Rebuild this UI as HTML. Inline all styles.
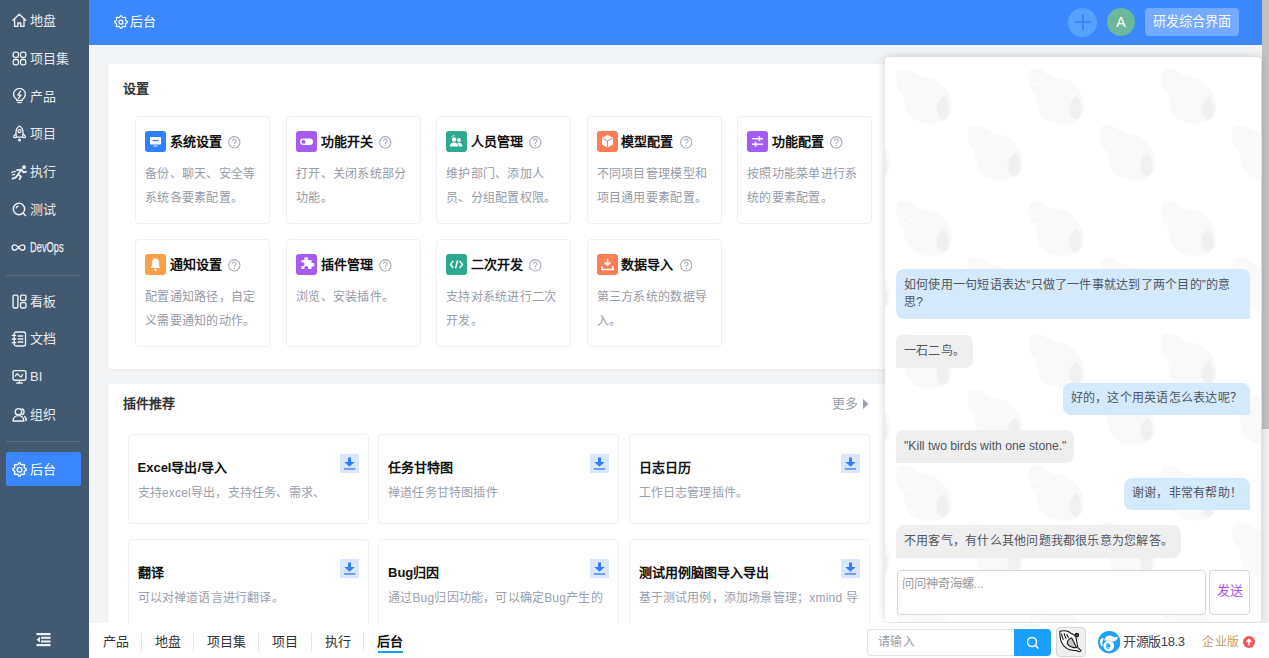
<!DOCTYPE html>
<html lang="zh-CN"><head><meta charset="utf-8">
<style>
*{box-sizing:border-box;margin:0;padding:0}
html,body{width:1269px;height:658px;overflow:hidden;background:#f3f4f6;font-family:"Liberation Sans",sans-serif;color:#333}
.abs{position:absolute}
#side{position:absolute;left:0;top:0;width:89px;height:658px;background:#43596f}
.nav{position:absolute;left:0;width:89px;height:20px;color:#e6eaf0;font-size:13px;line-height:20px}
.nav svg{position:absolute;left:11.5px;top:3px;width:15px;height:15px}
.nav span{position:absolute;left:30px;top:1px}
.sep{position:absolute;left:6px;width:75px;height:1px;background:#5d7086}
#active{position:absolute;left:6px;top:452px;width:75px;height:34px;background:#3a87ff;border-radius:2px}
#head{position:absolute;left:89px;top:0;width:1173px;height:45px;background:#3a87ff}
#sbar{position:absolute;left:1262px;top:0;width:7px;height:623px;background:#f1f1f1}
#sthumb{position:absolute;left:1262px;top:0;width:7px;height:429px;background:#c1c1c1}
.card{position:absolute;background:#fff;border-radius:4px;box-shadow:0 1px 4px rgba(0,0,0,.05)}
.ctitle{position:absolute;font-size:13px;font-weight:bold;color:#333;line-height:20px}
.tile{position:absolute;width:135px;height:107.5px;border:1px solid #eef0f3;border-radius:4px;background:#fff}
.tile .ic{position:absolute;left:9.2px;top:14px;width:21px;height:21px;border-radius:3px}
.tile .ic svg{position:absolute;left:0;top:0;width:21px;height:21px}
.tile .tt{position:absolute;left:33.8px;top:14px;font-size:13px;font-weight:bold;color:#111;line-height:21px;white-space:nowrap}
.tile .q{display:inline-block;vertical-align:top;margin-left:6.5px;margin-top:5px;width:12.6px;height:12.6px}
.tile .ds{position:absolute;left:9px;top:45px;font-size:12px;letter-spacing:.3px;color:#959ba7;line-height:24.3px;white-space:nowrap}
.ptile{position:absolute;width:241px;height:89.5px;border:1px solid #eef0f3;border-radius:4px;background:#fff}
.ptile .pt{position:absolute;left:9px;top:21.5px;font-size:13px;font-weight:bold;color:#111;line-height:21px;white-space:nowrap}
.ptile .pd{position:absolute;left:9px;top:47.5px;font-size:12px;letter-spacing:.2px;color:#9aa0ac;line-height:20px;white-space:nowrap}
.ptile .dl{position:absolute;left:211px;top:19px;width:19px;height:19px;background:#dae7ff}
#chat{position:absolute;left:885px;top:57px;width:376px;height:565px;background:#fff;border-radius:4px;box-shadow:0 0 8px rgba(0,0,0,.18);overflow:hidden}
#pat{position:absolute;left:0;top:0}
.bub{position:absolute;font-size:12px;letter-spacing:.23px;line-height:17.5px;color:#4f5562;padding:7.5px 8px;white-space:nowrap}
.bu{background:#d4e9fc;border-radius:8px 8px 0 8px}
.ba{background:#efefef;border-radius:8px 8px 8px 0}
#foot{position:absolute;left:89px;top:623px;width:1180px;height:35px;background:#fff}
.ft{position:absolute;top:0;height:35px;line-height:38px;font-size:13px;color:#333}
.fsep{position:absolute;top:10px;width:1px;height:18px;background:#e5e5e5}
</style></head><body>

<div id="side">
  <div class="nav" style="top:10px"><svg viewBox="0 0 15 15"><path d="M.9 7.3 7.3 1.2l6.4 6.1M2.6 6v7.4h3.3V10h2.8v3.4H12V6" fill="none" stroke="#eef1f5" stroke-width="1.35" stroke-linejoin="round" stroke-linecap="round"/></svg><span>地盘</span></div>
  <div class="nav" style="top:48px"><svg viewBox="0 0 15 15"><g fill="none" stroke="#eef1f5" stroke-width="1.3"><rect x="1.2" y="1.2" width="5.3" height="5.3" rx="1.8"/><rect x="8.5" y="1.2" width="5.3" height="5.3" rx="1.8"/><rect x="1.2" y="8.5" width="5.3" height="5.3" rx="1.8"/><rect x="8.5" y="8.5" width="5.3" height="5.3" rx="1.8"/></g></svg><span>项目集</span></div>
  <div class="nav" style="top:86px"><svg viewBox="0 0 15 16" style="height:16px;top:2px"><g fill="none" stroke="#eef1f5" stroke-width="1.3" stroke-linejoin="round"><path d="M4.6 11.2C2.7 10 1.6 8.2 1.6 6.3A5.9 5.9 0 0 1 13.4 6.3c0 1.9-1.1 3.7-3 4.9v1.2H4.6z"/><path d="M5.2 14.5h4.6"/><path d="M8.6 3.2 5.9 7.1h3.2L6.4 10.2" stroke-linecap="round"/></g></svg><span>产品</span></div>
  <div class="nav" style="top:123px"><svg viewBox="0 0 15 17" style="height:17px;top:2px"><g fill="none" stroke="#eef1f5" stroke-width="1.3" stroke-linejoin="round"><path d="M7.5 1C10.3 2.6 11.3 5.4 11 8.8L10.6 12.2H4.4L4 8.8C3.7 5.4 4.7 2.6 7.5 1Z"/><path d="M4.1 8.6 1.9 10.9C1.5 11.3 1.6 12.6 2.5 12.6H4.4M10.9 8.6 13.1 10.9C13.5 11.3 13.4 12.6 12.5 12.6H10.6"/><circle cx="7.5" cy="6.2" r="1.5"/></g><circle cx="7.5" cy="14.9" r="1.5" fill="#eef1f5"/></svg><span>项目</span></div>
  <div class="nav" style="top:161px"><svg viewBox="0 0 16 15" style="width:16px;height:15px;left:10.8px;top:3.5px"><circle cx="13" cy="2.2" r="1.9" fill="#eef1f5"/><g fill="none" stroke="#eef1f5" stroke-width="1.7" stroke-linecap="round" stroke-linejoin="round"><path d="M6 5.2 10.4 4.6 12.6 7.4 15.2 6.6"/><path d="M10.4 4.6 7 9.6 10 11.4 8.6 14.2"/><path d="M7 9.6 4.6 12.6 1.4 13.6"/></g><g stroke="#eef1f5" stroke-width="1.1" stroke-linecap="round"><path d="M.6 7.4 4.4 6.4M1.2 10 3.8 9.4"/></g></svg><span>执行</span></div>
  <div class="nav" style="top:199px"><svg viewBox="0 0 14 14"><g fill="none" stroke="#eef1f5" stroke-width="1.4"><circle cx="6.5" cy="6.5" r="5.3"/><path d="M10.3 10.3 13 13M3.8 6A2.8 2.8 0 0 1 6 3.8"/></g></svg><span>测试</span></div>
  <div class="nav" style="top:237px"><svg viewBox="0 0 14 14" style="width:15px;left:11px"><path d="M7 7C5.5 5.2 4.6 4.5 3.5 4.5a2.5 2.5 0 0 0 0 5C4.6 9.5 5.5 8.8 7 7s2.4-2.5 3.5-2.5a2.5 2.5 0 0 1 0 5C9.4 9.5 8.5 8.8 7 7z" fill="none" stroke="#eef1f5" stroke-width="1.3"/></svg><span style="font-size:15.5px;line-height:20px;transform:scaleX(.6);transform-origin:0 50%;top:-.5px;-webkit-text-stroke:.25px #eef1f5">DevOps</span></div>
  <div class="sep" style="top:275px"></div>
  <div class="nav" style="top:291px"><svg viewBox="0 0 14 14"><g fill="none" stroke="#eef1f5" stroke-width="1.3"><rect x="1" y="1" width="4.5" height="12" rx="1"/><rect x="8" y="1" width="5" height="5" rx="1"/><rect x="8" y="8" width="5" height="5" rx="1"/></g></svg><span>看板</span></div>
  <div class="nav" style="top:328px"><svg viewBox="0 0 16 16" style="width:16px;height:16px;left:10.5px;top:2.5px"><g fill="none" stroke="#eef1f5" stroke-width="1.3" stroke-linecap="round"><rect x="3.2" y="1" width="11.3" height="14" rx="2"/><path d="M1.3 4.3h3.4M1.3 8h3.4M1.3 11.7h3.4M7.2 5h4.6M7.2 8h4.6M7.2 11h4.6"/></g></svg><span>文档</span></div>
  <div class="nav" style="top:366px"><svg viewBox="0 0 14 14"><g fill="none" stroke="#eef1f5" stroke-width="1.3"><rect x="1" y="1.5" width="12" height="9" rx="1.5"/><path d="M4 13h6M7 10.5V13M3 7c1.2-3 2.2-3 3.5-1s2.3 2 3.5-1"/></g></svg><span>BI</span></div>
  <div class="nav" style="top:404px"><svg viewBox="0 0 14 14"><g fill="none" stroke="#eef1f5" stroke-width="1.3"><circle cx="6" cy="4.5" r="3"/><path d="M1 13c0-3 2.2-5 5-5s5 2 5 5zM9 1.6a3 3 0 0 1 0 5.8M11.5 8.5c1 .8 1.8 2.2 1.8 4.5"/></g></svg><span>组织</span></div>
  <div class="sep" style="top:441px"></div>
  <div id="active"></div>
  <div class="nav" style="top:459px"><svg viewBox="0 0 14 14"><g fill="none" stroke="#fff" stroke-width="1.3"><path d="M6.39 0.83 7.61 0.83 8.42 2.31 9.31 2.68 10.93 2.21 11.79 3.07 11.32 4.69 11.69 5.58 13.17 6.39 13.17 7.61 11.69 8.42 11.32 9.31 11.79 10.93 10.93 11.79 9.31 11.32 8.42 11.69 7.61 13.17 6.39 13.17 5.58 11.69 4.69 11.32 3.07 11.79 2.21 10.93 2.68 9.31 2.31 8.42 0.83 7.61 0.83 6.39 2.31 5.58 2.68 4.69 2.21 3.07 3.07 2.21 4.69 2.68 5.58 2.31Z" stroke-linejoin="round"/><circle cx="7" cy="7.2" r="2.2"/></g></svg><span style="color:#fff">后台</span></div>
  <svg class="abs" style="left:36px;top:633px" width="15" height="14" viewBox="0 0 15 14"><g fill="#eef1f5"><rect x="0.5" y="0" width="14" height="2.2"/><rect x="5" y="3.8" width="9.5" height="2"/><rect x="5" y="7.5" width="9.5" height="2"/><rect x="0.5" y="11" width="14" height="2.2"/><path d="M0.5 6.7 4 3.8v5.8z"/></g></svg>
</div>

<div id="head">
  <svg class="abs" style="left:25px;top:15px" width="14" height="14" viewBox="0 0 14 14"><g fill="none" stroke="#fff" stroke-width="1.2"><path d="M6.39 0.83 7.61 0.83 8.42 2.31 9.31 2.68 10.93 2.21 11.79 3.07 11.32 4.69 11.69 5.58 13.17 6.39 13.17 7.61 11.69 8.42 11.32 9.31 11.79 10.93 10.93 11.79 9.31 11.32 8.42 11.69 7.61 13.17 6.39 13.17 5.58 11.69 4.69 11.32 3.07 11.79 2.21 10.93 2.68 9.31 2.31 8.42 0.83 7.61 0.83 6.39 2.31 5.58 2.68 4.69 2.21 3.07 3.07 2.21 4.69 2.68 5.58 2.31Z" stroke-linejoin="round"/><circle cx="7" cy="7.2" r="2"/></g></svg>
  <div class="abs" style="left:41px;top:12px;font-size:13px;line-height:20px;color:#fff">后台</div>
  <div class="abs" style="left:979px;top:8px;width:29px;height:29px;border-radius:50%;background:#56a3ff"></div>
  <div class="abs" style="left:986px;top:21px;width:16px;height:2px;background:#3a87ff"></div>
  <div class="abs" style="left:993px;top:14px;width:2px;height:16px;background:#3a87ff"></div>
  <div class="abs" style="left:1018px;top:8px;width:28px;height:28px;border-radius:50%;background:#6bb99a;color:#fff;font-size:14px;line-height:28px;text-align:center">A</div>
  <div class="abs" style="left:1056px;top:7.5px;width:94px;height:28.5px;border-radius:4px;background:#74aaff;color:#f4f8ff;font-size:13.2px;line-height:28px;text-align:center">研发综合界面</div>
</div>

<div id="sbar"></div><div id="sthumb"></div>

<!-- settings card -->
<div class="card" style="left:108px;top:64px;width:790px;height:305px">
  <div class="ctitle" style="left:15px;top:15px">设置</div>
</div>
<div class="tile" style="left:135px;top:116px"><div class="ic" style="background:#2f7fff"><svg viewBox="0 0 21 21"><rect x="5" y="6" width="11" height="7.5" rx="1" fill="#fff"/><rect x="7.5" y="9" width="6" height="1.2" fill="#2f7fff"/><rect x="8.5" y="14.5" width="4" height="1" fill="#fff"/></svg></div><div class="tt">系统设置<svg class="q" viewBox="0 0 12 12"><circle cx="6" cy="6" r="5.4" fill="none" stroke="#a3a8b3" stroke-width="1"/><path d="M4.3 4.6a1.7 1.7 0 1 1 2.5 1.5c-.6.3-.8.6-.8 1.2v.3" fill="none" stroke="#a3a8b3" stroke-width="1"/><circle cx="6" cy="9" r=".6" fill="#a3a8b3"/></svg></div><div class="ds">备份、聊天、安全等<br>系统各要素配置。</div></div>
<div class="tile" style="left:286px;top:116px"><div class="ic" style="background:#a45cf5"><svg viewBox="0 0 21 21"><rect x="4" y="7.5" width="13" height="6.5" rx="3.25" fill="#fff"/><circle cx="7.5" cy="10.75" r="2" fill="#a45cf5"/></svg></div><div class="tt">功能开关<svg class="q" viewBox="0 0 12 12"><circle cx="6" cy="6" r="5.4" fill="none" stroke="#a3a8b3" stroke-width="1"/><path d="M4.3 4.6a1.7 1.7 0 1 1 2.5 1.5c-.6.3-.8.6-.8 1.2v.3" fill="none" stroke="#a3a8b3" stroke-width="1"/><circle cx="6" cy="9" r=".6" fill="#a3a8b3"/></svg></div><div class="ds">打开、关闭系统部分<br>功能。</div></div>
<div class="tile" style="left:436px;top:116px"><div class="ic" style="background:#2ea88e"><svg viewBox="0 0 21 21"><circle cx="8" cy="8.5" r="2.2" fill="#fff"/><path d="M3.8 15.5c0-2.5 1.8-4 4.2-4s4.2 1.5 4.2 4z" fill="#fff"/><circle cx="13" cy="9" r="1.9" fill="#fff"/><path d="M11.5 11.8c2.8-.6 5 .8 5 3.7h-3.5" fill="#fff"/><path d="M5.5 5.5l3-1" stroke="#fff" stroke-width=".8"/></svg></div><div class="tt">人员管理<svg class="q" viewBox="0 0 12 12"><circle cx="6" cy="6" r="5.4" fill="none" stroke="#a3a8b3" stroke-width="1"/><path d="M4.3 4.6a1.7 1.7 0 1 1 2.5 1.5c-.6.3-.8.6-.8 1.2v.3" fill="none" stroke="#a3a8b3" stroke-width="1"/><circle cx="6" cy="9" r=".6" fill="#a3a8b3"/></svg></div><div class="ds">维护部门、添加人<br>员、分组配置权限。</div></div>
<div class="tile" style="left:586.5px;top:116px"><div class="ic" style="background:#ff7d54"><svg viewBox="0 0 21 21"><path d="M10.5 4 16 6.8v6.6L10.5 16.5 5 13.4V6.8z" fill="#fff"/><path d="M5.5 7.2l5 2.6 5-2.6M10.5 9.8v6.2" fill="none" stroke="#ff7d54" stroke-width="1"/></svg></div><div class="tt">模型配置<svg class="q" viewBox="0 0 12 12"><circle cx="6" cy="6" r="5.4" fill="none" stroke="#a3a8b3" stroke-width="1"/><path d="M4.3 4.6a1.7 1.7 0 1 1 2.5 1.5c-.6.3-.8.6-.8 1.2v.3" fill="none" stroke="#a3a8b3" stroke-width="1"/><circle cx="6" cy="9" r=".6" fill="#a3a8b3"/></svg></div><div class="ds">不同项目管理模型和<br>项目通用要素配置。</div></div>
<div class="tile" style="left:737px;top:116px"><div class="ic" style="background:#a45cf5"><svg viewBox="0 0 21 21"><rect x="5" y="7" width="11" height="1.4" fill="#fff"/><rect x="5" y="12.5" width="11" height="1.4" fill="#fff"/><rect x="11.5" y="5.2" width="1.6" height="5" fill="#fff"/><rect x="7.8" y="10.7" width="1.6" height="5" fill="#fff"/></svg></div><div class="tt">功能配置<svg class="q" viewBox="0 0 12 12"><circle cx="6" cy="6" r="5.4" fill="none" stroke="#a3a8b3" stroke-width="1"/><path d="M4.3 4.6a1.7 1.7 0 1 1 2.5 1.5c-.6.3-.8.6-.8 1.2v.3" fill="none" stroke="#a3a8b3" stroke-width="1"/><circle cx="6" cy="9" r=".6" fill="#a3a8b3"/></svg></div><div class="ds">按照功能菜单进行系<br>统的要素配置。</div></div>
<div class="tile" style="left:135px;top:239px"><div class="ic" style="background:#ff9f46"><svg viewBox="0 0 21 21"><path d="M10.5 4.5c-2.3 0-3.6 1.8-3.6 4v3.5L5.5 14h10l-1.4-2V8.5c0-2.2-1.3-4-3.6-4z" fill="#fff"/><rect x="9" y="15" width="3" height="1.5" rx=".7" fill="#fff"/></svg></div><div class="tt">通知设置<svg class="q" viewBox="0 0 12 12"><circle cx="6" cy="6" r="5.4" fill="none" stroke="#a3a8b3" stroke-width="1"/><path d="M4.3 4.6a1.7 1.7 0 1 1 2.5 1.5c-.6.3-.8.6-.8 1.2v.3" fill="none" stroke="#a3a8b3" stroke-width="1"/><circle cx="6" cy="9" r=".6" fill="#a3a8b3"/></svg></div><div class="ds">配置通知路径，自定<br>义需要通知的动作。</div></div>
<div class="tile" style="left:286px;top:239px"><div class="ic" style="background:#a45cf5"><svg viewBox="0 0 21 21"><path d="M5 8h3a2 2 0 1 1 3.5 0H15v3a2 2 0 1 1 0 3.5V17h-3.5a2 2 0 1 0-3.5 0H5v-3a2 2 0 1 0 0-3.5z" fill="#fff" transform="translate(0.5 -2)"/></svg></div><div class="tt">插件管理<svg class="q" viewBox="0 0 12 12"><circle cx="6" cy="6" r="5.4" fill="none" stroke="#a3a8b3" stroke-width="1"/><path d="M4.3 4.6a1.7 1.7 0 1 1 2.5 1.5c-.6.3-.8.6-.8 1.2v.3" fill="none" stroke="#a3a8b3" stroke-width="1"/><circle cx="6" cy="9" r=".6" fill="#a3a8b3"/></svg></div><div class="ds">浏览、安装插件。</div></div>
<div class="tile" style="left:436px;top:239px"><div class="ic" style="background:#2ea88e"><svg viewBox="0 0 21 21"><path d="M7.3 7 4.5 10.5 7.3 14M13.7 7l2.8 3.5-2.8 3.5M11.5 6.5 9.5 14.5" fill="none" stroke="#fff" stroke-width="1.4"/></svg></div><div class="tt">二次开发<svg class="q" viewBox="0 0 12 12"><circle cx="6" cy="6" r="5.4" fill="none" stroke="#a3a8b3" stroke-width="1"/><path d="M4.3 4.6a1.7 1.7 0 1 1 2.5 1.5c-.6.3-.8.6-.8 1.2v.3" fill="none" stroke="#a3a8b3" stroke-width="1"/><circle cx="6" cy="9" r=".6" fill="#a3a8b3"/></svg></div><div class="ds">支持对系统进行二次<br>开发。</div></div>
<div class="tile" style="left:586.5px;top:239px"><div class="ic" style="background:#ff7d54"><svg viewBox="0 0 21 21"><path d="M10.5 4.5v6.5M7.5 8.3l3 3 3-3" fill="none" stroke="#fff" stroke-width="1.6"/><path d="M5 12v3.5h11V12" fill="none" stroke="#fff" stroke-width="1.6"/></svg></div><div class="tt">数据导入<svg class="q" viewBox="0 0 12 12"><circle cx="6" cy="6" r="5.4" fill="none" stroke="#a3a8b3" stroke-width="1"/><path d="M4.3 4.6a1.7 1.7 0 1 1 2.5 1.5c-.6.3-.8.6-.8 1.2v.3" fill="none" stroke="#a3a8b3" stroke-width="1"/><circle cx="6" cy="9" r=".6" fill="#a3a8b3"/></svg></div><div class="ds">第三方系统的数据导<br>入。</div></div>

<!-- plugin card -->
<div class="card" style="left:108px;top:384px;width:790px;height:300px">
  <div class="ctitle" style="left:15px;top:10px">插件推荐</div>
  <div class="abs" style="left:724px;top:10px;font-size:13px;line-height:20px;color:#9aa0ac">更多</div>
  <svg class="abs" style="left:755px;top:15px" width="6" height="10"><path d="M0 0 5.5 5 0 10z" fill="#9aa0ac"/></svg>
</div>

<div class="ptile" style="left:127.5px;top:434px"><div class="pt">Excel导出/导入</div><div class="pd">支持excel导出，支持任务、需求、</div><div class="dl"><svg viewBox="0 0 19 19" width="19" height="19"><rect x="8" y="3.5" width="3" height="5" fill="#2f7fff"/><path d="M4.3 8h10.4L9.5 12.8z" fill="#2f7fff"/><rect x="3.8" y="14.3" width="11.4" height="1.3" fill="#2f7fff"/></svg></div></div>
<div class="ptile" style="left:378px;top:434px"><div class="pt">任务甘特图</div><div class="pd">禅道任务甘特图插件</div><div class="dl"><svg viewBox="0 0 19 19" width="19" height="19"><rect x="8" y="3.5" width="3" height="5" fill="#2f7fff"/><path d="M4.3 8h10.4L9.5 12.8z" fill="#2f7fff"/><rect x="3.8" y="14.3" width="11.4" height="1.3" fill="#2f7fff"/></svg></div></div>
<div class="ptile" style="left:628.5px;top:434px"><div class="pt">日志日历</div><div class="pd">工作日志管理插件。</div><div class="dl"><svg viewBox="0 0 19 19" width="19" height="19"><rect x="8" y="3.5" width="3" height="5" fill="#2f7fff"/><path d="M4.3 8h10.4L9.5 12.8z" fill="#2f7fff"/><rect x="3.8" y="14.3" width="11.4" height="1.3" fill="#2f7fff"/></svg></div></div>
<div class="ptile" style="left:127.5px;top:539px"><div class="pt">翻译</div><div class="pd">可以对禅道语言进行翻译。</div><div class="dl"><svg viewBox="0 0 19 19" width="19" height="19"><rect x="8" y="3.5" width="3" height="5" fill="#2f7fff"/><path d="M4.3 8h10.4L9.5 12.8z" fill="#2f7fff"/><rect x="3.8" y="14.3" width="11.4" height="1.3" fill="#2f7fff"/></svg></div></div>
<div class="ptile" style="left:378px;top:539px"><div class="pt">Bug归因</div><div class="pd">通过Bug归因功能，可以确定Bug产生的</div><div class="dl"><svg viewBox="0 0 19 19" width="19" height="19"><rect x="8" y="3.5" width="3" height="5" fill="#2f7fff"/><path d="M4.3 8h10.4L9.5 12.8z" fill="#2f7fff"/><rect x="3.8" y="14.3" width="11.4" height="1.3" fill="#2f7fff"/></svg></div></div>
<div class="ptile" style="left:628.5px;top:539px"><div class="pt">测试用例脑图导入导出</div><div class="pd">基于测试用例，添加场景管理；xmind 导</div><div class="dl"><svg viewBox="0 0 19 19" width="19" height="19"><rect x="8" y="3.5" width="3" height="5" fill="#2f7fff"/><path d="M4.3 8h10.4L9.5 12.8z" fill="#2f7fff"/><rect x="3.8" y="14.3" width="11.4" height="1.3" fill="#2f7fff"/></svg></div></div>
<!-- chat -->
<div id="chat"><svg id="pat" width="377" height="565"><defs><g id="sh"><path d="M.5 3.2C2 1 4 .3 5 .5 8 0 10 .5 12 1 15 2 17 4 18.6 5.3 21 6 24 7 26 8.5 30 9 34 9.6 36.7 10.6 41 12.5 45 15 47 18 51 22 54 27 55 32 56 37 55.5 42 54 45.7 52 50 49 52.5 45 54 40 55.2 34 55.5 29 55 24 54 19 52.5 15.4 50 12 46.5 10 43 9 39 8 35 7.3 31 7 26.6 5 25 3 23 2 21 .8 18 0 15.5 0 12.8 0 9.5 0 6 .5 3.2Z" fill="#f9f9f9"/><path d="M1 9C5 8 10 9 14 12M2.5 16C7 15 12 17 16 20M5 23C9 22 14 24 17 28" fill="none" stroke="#fdfdfd" stroke-width="1.6"/><path d="M48 28C52 33 54 40 51.5 48 50 51 47 52 44 50 41 47 40 42 41 37 42 33 45 30 48 28Z" fill="#f0f0f0"/></g><pattern id="pp" width="132.4" height="132.4" patternUnits="userSpaceOnUse"><use href="#sh" x="11.3" y="11.3"/><use href="#sh" x="82.5" y="67.7"/><use href="#sh" x="-49.9" y="67.7"/><use href="#sh" x="82.5" y="-64.7"/><use href="#sh" x="-49.9" y="-64.7"/></pattern></defs><rect width="377" height="565" fill="url(#pp)"/></svg><div class="bub bu" style="left:11px;top:212px;width:354px;white-space:normal">如何使用一句短语表达“只做了一件事就达到了两个目的”的意思?</div><div class="bub ba" style="left:11px;top:278px">一石二鸟。</div><div class="bub bu" style="right:11px;top:325.5px">好的，这个用英语怎么表达呢？</div><div class="bub ba" style="left:11px;top:373px;font-size:12.2px;letter-spacing:0">"Kill two birds with one stone."</div><div class="bub bu" style="right:11px;top:420.5px">谢谢，非常有帮助！</div><div class="bub ba" style="left:11px;top:468px">不用客气，有什么其他问题我都很乐意为您解答。</div><div class="abs" style="left:11.5px;top:513px;width:309px;height:44.5px;border:1px solid #d8d8d8;border-radius:4px;background:#fff;font-size:12.35px;color:#999;padding:4.5px 4px;line-height:17px">问问神奇海螺...</div><div class="abs" style="left:324px;top:513px;width:41px;height:44.5px;border:1px solid #d8d8d8;border-radius:4px;background:#fff;font-size:13px;color:#a855f7;text-align:center;line-height:40px">发送</div></div>

<div id="foot">
  <div class="ft" style="left:14px">产品</div>
  <div class="fsep" style="left:52px"></div>
  <div class="ft" style="left:66px">地盘</div>
  <div class="fsep" style="left:104px"></div>
  <div class="ft" style="left:118px">项目集</div>
  <div class="fsep" style="left:169px"></div>
  <div class="ft" style="left:183px">项目</div>
  <div class="fsep" style="left:222px"></div>
  <div class="ft" style="left:236px">执行</div>
  <div class="fsep" style="left:274px"></div>
  <div class="ft" style="left:288px;font-weight:bold;color:#111">后台</div>
  <div class="abs" style="left:289px;top:28px;width:25px;height:2px;background:#1a9cf0"></div>
  <div class="abs" style="left:778px;top:6px;width:148px;height:27px;border:1px solid #e2e4e8;border-right:0;border-radius:4px 0 0 4px;background:#fff;font-size:12px;letter-spacing:.4px;color:#9aa0ac;line-height:25px;padding-left:10px">请输入</div>
  <div class="abs" style="left:925px;top:6px;width:37px;height:26.5px;background:#1a9fff;border-radius:0 4px 4px 0"><svg class="abs" style="left:12px;top:7px" width="14" height="14" viewBox="0 0 14 14"><circle cx="6" cy="6" r="4.5" fill="none" stroke="#fff" stroke-width="1.4"/><path d="M9.3 9.3 12.5 12.5" stroke="#fff" stroke-width="1.4"/></svg></div>
  <div class="abs" style="left:967.3px;top:4.2px;width:29.3px;height:29.4px;border:1px solid #d2d6dc;border-radius:4px;background:#f0f0f0"><svg class="abs" style="left:-1px;top:-1px" width="29" height="29" viewBox="0 0 29 29"><g fill="none" stroke="#111" stroke-width="1.05" stroke-linejoin="round" stroke-linecap="round"><path d="M3.9 4.2C7 3.5 10.5 3.8 13.3 5.1 14.5 6.4 16 7 18 7.8L19.8 9.8C20.6 13.2 21 17 21.9 20.6 22.9 21.8 24.6 22.9 25.1 23.8 24.2 25 22.6 24.8 21.2 23.8 18.2 23.6 15.3 23.3 12.8 22.6 8.6 20.5 5.6 16.6 4.6 12.6 4 9.8 3.8 7 3.9 4.2Z" fill="#fff"/><path d="M11.2 16.6C11.1 14 12.8 12 15.6 10.7L20.6 20.8C16.9 20.8 13.3 19.5 11.2 16.6Z" fill="#c8c8c8"/><path d="M5.6 6.8C5.8 8.8 6.3 10.6 7.2 12.4M8.2 6.4C8.6 8.3 9.2 9.8 10.1 11.5M10.8 7.2C11.2 8.7 11.7 9.6 12.3 10.6"/></g><circle cx="20.9" cy="8.1" r="2.3" fill="#1a1a1a"/><path d="M19.6 9.2 22.2 7M19.8 7.2 22 9" stroke="#888" stroke-width=".5"/></svg></div>
  <svg class="abs" style="left:1008.8px;top:8.4px" width="22.4" height="22.4" viewBox="0 0 22.4 22.4"><circle cx="11.2" cy="11.2" r="11.2" fill="#1ea0f3"/><g fill="#fff"><path d="M6.2 9.2C7 6 9 4.2 11.8 4.4 14 4.6 15.3 6 17 6.2 18.2 6.3 19.2 5.8 19.9 5 19.8 8.4 18 10.5 15.6 10.5 14.2 10.5 13.4 9.9 12.2 9.7 9.8 9.4 7.6 10 6.2 9.2Z"/><path d="M2.3 8.6C3.4 7.2 4.8 7 5.9 7.4 4.5 9.2 4.1 11.8 4.7 14.6L3.3 15.4C2.2 13.2 1.9 10.7 2.3 8.6Z"/><circle cx="10.8" cy="14.8" r="5.4"/></g><circle cx="10.8" cy="14.8" r="1.7" fill="#1ea0f3"/><path d="M10.8 12.2A2.6 2.6 0 0 0 8.2 14.8 2.9 2.9 0 0 0 11 17.8" fill="none" stroke="#1ea0f3" stroke-width="1"/></svg>
  <div class="abs" style="left:1034px;top:0;height:35px;line-height:38px;font-size:13px;letter-spacing:-.4px;color:#3a3f4b">开源版18.3</div>
  <div class="abs" style="left:1113px;top:0;height:35px;line-height:38px;font-size:12px;letter-spacing:.6px;color:#c39a6e">企业版</div>
  <svg class="abs" style="left:1154px;top:12.5px" width="12" height="12" viewBox="0 0 12 12"><circle cx="6" cy="6" r="6" fill="#f25757"/><path d="M6 9.5V4M3.5 6 6 3.3 8.5 6" fill="none" stroke="#fff" stroke-width="1.5"/></svg>
</div>

</body></html>
